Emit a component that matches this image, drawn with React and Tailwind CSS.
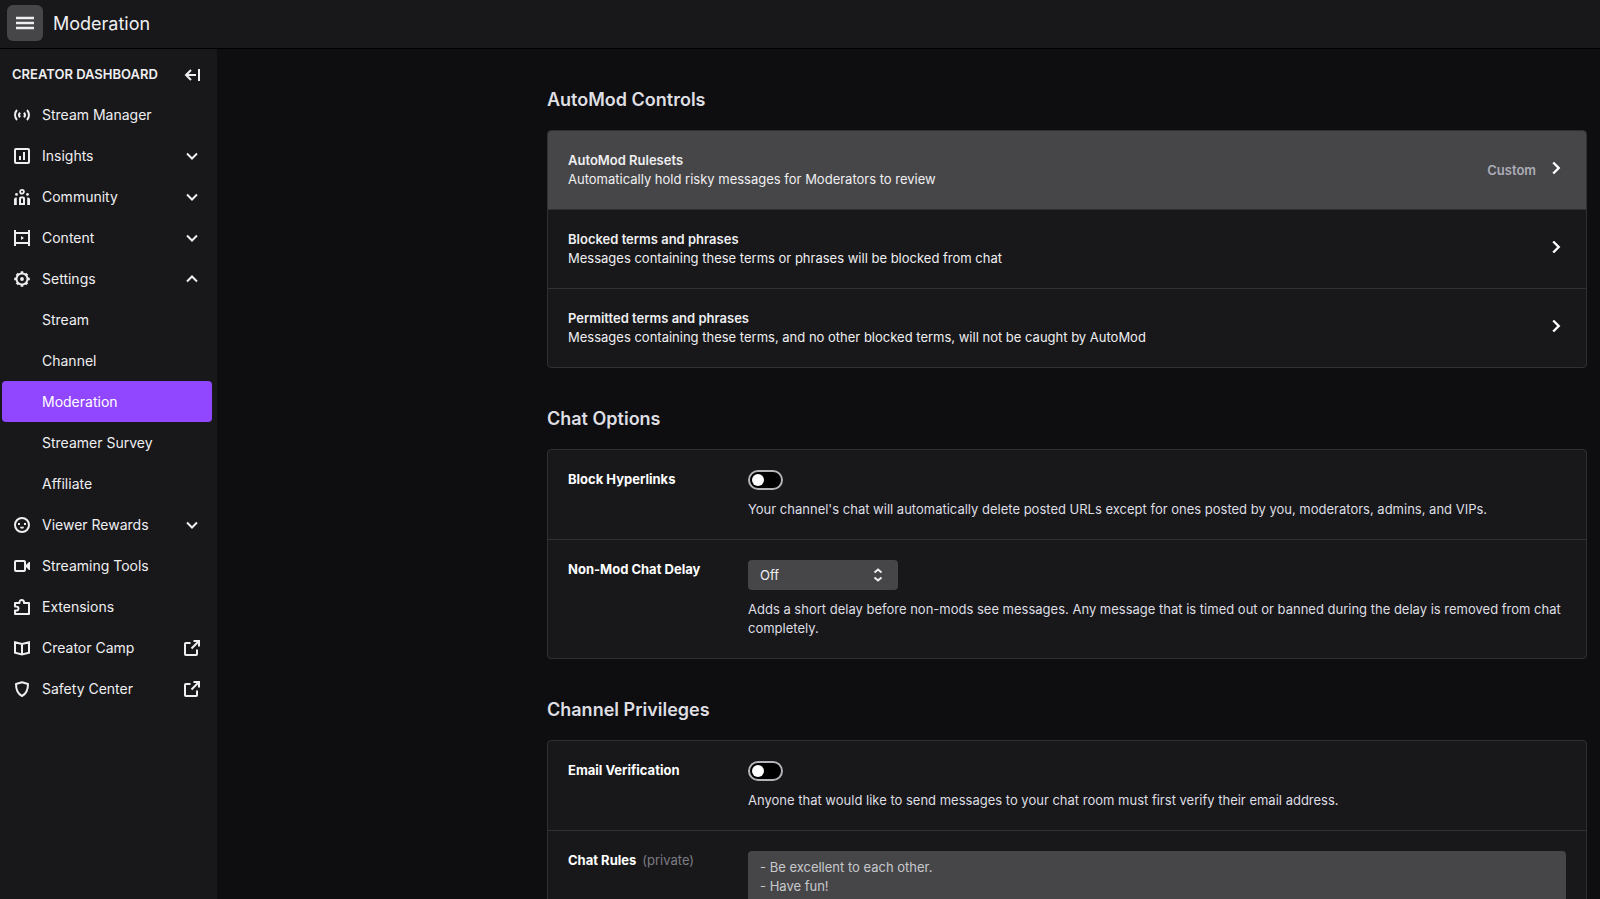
import React, { useState } from 'react';

const Icon = ({ children, size = 16 }) => (
  <svg
    width={size}
    height={size}
    viewBox={`0 0 ${size} ${size}`}
    fill="none"
    stroke="currentColor"
    strokeWidth="2"
    className="shrink-0"
    aria-hidden="true"
  >
    {children}
  </svg>
);

const icons = {
  stream: (
    <Icon>
      <path d="M3 3C.4 5.6.4 10.4 3 13M13 3c2.600 2.600 2.600 7.400 0 10" strokeWidth="2" />
      <path d="M6 5.600C4.800 7 4.800 9 6 10.400M10 5.600c1.200 1.400 1.200 3.400 0 4.800" strokeWidth="2" />
    </Icon>
  ),
  insights: (
    <Icon>
      <rect x="1" y="1" width="14" height="14" rx="1" />
      <path d="M6 8v4M10 4v8" />
    </Icon>
  ),
  community: (
    <Icon>
      <circle cx="8" cy="2.800" r="1.900" strokeWidth="1.800" />
      <path d="M6 16V9.500a1 1 0 0 1 1-1h2a1 1 0 0 1 1 1V16M6 15h4" />
      <path d="M0 16v-5.500A2 2 0 0 1 2 8.500h.8V16zM16 16v-5.500a2 2 0 0 0-2-2h-.8V16z" fill="currentColor" stroke="none" />
      <circle cx="2.500" cy="5.400" r="1.400" fill="currentColor" stroke="none" />
      <circle cx="13.500" cy="5.400" r="1.400" fill="currentColor" stroke="none" />
    </Icon>
  ),
  content: (
    <Icon>
      <path d="M1 0v16M15 0v16M1 3h14M1 13h14" />
      <path d="M7 6v4l3-2z" fill="currentColor" stroke="none" />
    </Icon>
  ),
  settings: (
    <Icon>
      <circle cx="8" cy="8" r="5.500" />
      <circle cx="8" cy="8" r="1.900" fill="currentColor" stroke="none" />
      <path d="M8 .2v2M8 13.800v2M.2 8h2M13.800 8h2" strokeWidth="2.600" />
      <path d="M2.800 2.800 4 4M12 12l1.200 1.200M2.800 13.200 4 12M12 4l1.200-1.200" strokeWidth="3" />
    </Icon>
  ),
  rewards: (
    <Icon>
      <circle cx="8" cy="8" r="7" />
      <path d="M4 7h2M10 7h2" strokeWidth="1.800" />
      <path d="M6 9.800h4a2 2 0 0 1-4 0z" fill="currentColor" stroke="none" />
    </Icon>
  ),
  tools: (
    <Icon>
      <rect x="1" y="3" width="10" height="10" rx="1" />
      <path d="M11 8l4-4h1v8h-1z" fill="currentColor" stroke="none" />
    </Icon>
  ),
  extensions: (
    <Icon>
      <path d="M1 15v-3.500c2.600.4 3.500-.7 3.500-2S3.600 7.200 1 7.500V4h4.500C5.300 2 6.300 1 7.700 1s2.500 1 2.300 3h5v11z" strokeLinejoin="round" />
    </Icon>
  ),
  book: (
    <Icon>
      <path d="M8 4 1 2.300v10.400L8 14.500l7-1.800V2.300zM8 4v10" />
    </Icon>
  ),
  shield: (
    <Icon>
      <path d="M8 1.200 2 3c0 5 1 9.500 6 12 5-2.500 6-7 6-12z" strokeLinejoin="round" />
    </Icon>
  ),
};

const Chevron = ({ open }) => (
  <Icon>
    <path d={open ? 'M3 10.500 8 5.500l5 5' : 'M3 5.500l5 5 5-5'} />
  </Icon>
);

const ChevronRight = () => (
  <Icon size={20}>
    <path d="M7.200 4.500l5.500 5.500-5.500 5.500" strokeWidth="2.400" />
  </Icon>
);

const External = () => (
  <Icon>
    <path d="M6.500 3H1.800a.8.8 0 0 0-.8.8V14.200a.8.8 0 0 0 .8.8h10.400a.8.8 0 0 0 .8-.8V9.500" />
    <path d="M9.500 1H15v5.500M15 1 7.500 8.500" />
  </Icon>
);

const navItems = [
  { label: 'Stream Manager', icon: 'stream' },
  { label: 'Insights', icon: 'insights', children: [] },
  { label: 'Community', icon: 'community', children: [] },
  { label: 'Content', icon: 'content', children: [] },
  {
    label: 'Settings',
    icon: 'settings',
    children: ['Stream', 'Channel', 'Moderation', 'Streamer Survey', 'Affiliate'],
  },
  { label: 'Viewer Rewards', icon: 'rewards', children: [] },
  { label: 'Streaming Tools', icon: 'tools' },
  { label: 'Extensions', icon: 'extensions' },
  { label: 'Creator Camp', icon: 'book', external: true },
  { label: 'Safety Center', icon: 'shield', external: true },
];

const automodRows = [
  {
    title: 'AutoMod Rulesets',
    text: 'Automatically hold risky messages for Moderators to review',
    value: 'Custom',
    highlighted: true,
  },
  {
    title: 'Blocked terms and phrases',
    text: 'Messages containing these terms or phrases will be blocked from chat',
  },
  {
    title: 'Permitted terms and phrases',
    text: 'Messages containing these terms, and no other blocked terms, will not be caught by AutoMod',
  },
];

const rowClass = 'flex h-[41px] w-full items-center gap-3 rounded px-3 text-left';

const Sidebar = () => {
  const [open, setOpen] = useState({ Settings: true });

  const toggle = (label) => setOpen((prev) => ({ ...prev, [label]: !prev[label] }));

  return (
    <aside className="w-[217px] shrink-0 bg-[#18181b] pr-[5px] pl-0.5 text-sm text-[#efeff1]">
      <div className="flex h-[45px] items-center justify-between pt-1.5 pr-3 pl-2.5">
        <h2 className="text-[13px] font-semibold whitespace-nowrap uppercase">Creator Dashboard</h2>
        <button aria-label="Collapse sidebar">
          <Icon>
            <path d="M15 2v12M12 8H2M7 3 2 8l5 5" />
          </Icon>
        </button>
      </div>
      <nav>
        {navItems.map((item) => (
          <React.Fragment key={item.label}>
            {item.children ? (
              <button className={rowClass} aria-expanded={!!open[item.label]} onClick={() => toggle(item.label)}>
                {icons[item.icon]}
                <span className="flex-1">{item.label}</span>
                <Chevron open={open[item.label]} />
              </button>
            ) : (
              <a href="#" className={rowClass}>
                {icons[item.icon]}
                <span className="flex-1">{item.label}</span>
                {item.external && <External />}
              </a>
            )}
            {open[item.label] && item.children.map((child) => (
              <a
                key={child}
                href="#"
                className={`flex h-[41px] items-center rounded pl-10 ${
                  child === 'Moderation' ? 'bg-[#9147ff] text-white' : ''
                }`}
              >
                {child}
              </a>
            ))}
          </React.Fragment>
        ))}
      </nav>
    </aside>
  );
};

const Section = ({ title, children }) => (
  <section className="pt-[39px]">
    <h2 className="mb-[18px] text-lg leading-6 font-semibold text-[#dedee3]">{title}</h2>
    <div className="divide-y divide-[#303032] overflow-hidden rounded border border-[#303032] bg-[#18181b]">
      {children}
    </div>
  </section>
);

const Field = ({ id, label, note, help, children }) => (
  <div className="flex p-5">
    <div className="w-[180px] shrink-0">
      <label htmlFor={id} className="font-bold text-white">{label}</label>
      {note && <span className="ml-1.5 text-[#7c7c83]">{note}</span>}
    </div>
    <div className="min-w-0 flex-1">
      {children}
      {help && <p className="mt-2.5 text-[#dedee3]">{help}</p>}
    </div>
  </div>
);

const Toggle = ({ id }) => (
  <input
    id={id}
    type="checkbox"
    role="switch"
    className="block h-5 w-[35px] appearance-none rounded-full border-2 border-[#b3b3b8] bg-black p-0.5 before:block before:size-3 before:rounded-full before:bg-white checked:bg-[#9147ff] checked:before:ml-auto"
  />
);

export default function App() {
  const [delay, setDelay] = useState('Off');
  const [rules, setRules] = useState('- Be excellent to each other.\n- Have fun!');

  return (
    <div className="flex h-screen flex-col overflow-hidden bg-[#0e0e10] font-['Inter',sans-serif] text-[#efeff1]">
      <header className="flex h-[49px] shrink-0 items-center gap-2.5 border-b border-black bg-[#18181b] pb-0.5 pl-[7px]">
        <button aria-label="Menu" className="flex size-9 items-center justify-center rounded-md bg-[#464649]">
          <Icon size={18}>
            <path d="M0 4h18M0 9h18M0 14h18" strokeWidth="2.400" />
          </Icon>
        </button>
        <h1 className="pt-0.5 text-lg">Moderation</h1>
      </header>

      <div className="flex min-h-0 flex-1">
        <Sidebar />

        <main className="min-w-0 flex-1 overflow-y-auto pr-[13px] text-[13px] leading-[19px] [scrollbar-width:none]">
          <div className="ml-auto max-w-[1040px]">
            <Section title="AutoMod Controls">
              {automodRows.map((row) => (
                <button
                  key={row.title}
                  className={`flex w-full items-center gap-2.5 p-5 text-left ${row.highlighted ? 'bg-[#464649]' : ''}`}
                >
                  <span className="flex-1">
                    <span className="block font-semibold">{row.title}</span>
                    <span className="block">{row.text}</span>
                  </span>
                  {row.value && <span className="font-semibold text-[#adadb8]">{row.value}</span>}
                  <span className="pb-1 text-white"><ChevronRight /></span>
                </button>
              ))}
            </Section>

            <Section title="Chat Options">
              <Field
                id="block-links"
                label="Block Hyperlinks"
                help="Your channel's chat will automatically delete posted URLs except for ones posted by you, moderators, admins, and VIPs."
              >
                <Toggle id="block-links" />
              </Field>
              <Field
                id="chat-delay"
                label="Non-Mod Chat Delay"
                help="Adds a short delay before non-mods see messages. Any message that is timed out or banned during the delay is removed from chat completely."
              >
                <div className="grid w-[150px] items-center">
                  <select
                    id="chat-delay"
                    value={delay}
                    onChange={(e) => setDelay(e.target.value)}
                    className="col-start-1 row-start-1 h-[30px] appearance-none rounded bg-[#464649] px-3"
                  >
                    <option>Off</option>
                    <option>2 seconds</option>
                    <option>4 seconds</option>
                    <option>6 seconds</option>
                  </select>
                  <span className="pointer-events-none col-start-1 row-start-1 mr-3 justify-self-end">
                    <Icon>
                      <path d="M4.500 5.500 8 2.500l3.500 3M4.500 10.500l3.500 3 3.500-3" />
                    </Icon>
                  </span>
                </div>
              </Field>
            </Section>

            <Section title="Channel Privileges">
              <Field
                id="email"
                label="Email Verification"
                help="Anyone that would like to send messages to your chat room must first verify their email address."
              >
                <Toggle id="email" />
              </Field>
              <Field id="rules" label="Chat Rules" note="(private)">
                <textarea
                  id="rules"
                  value={rules}
                  onChange={(e) => setRules(e.target.value)}
                  className="block h-24 w-full resize-none rounded bg-[#464649] px-3 py-[7px] text-[#c8c8cc]"
                />
              </Field>
            </Section>
          </div>
        </main>
      </div>
    </div>
  );
}
